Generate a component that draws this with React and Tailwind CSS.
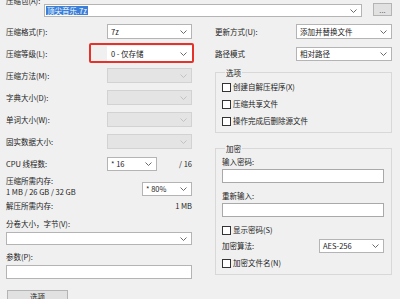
import React from "react";

function Chev({ c = "#5a5a5a" }) {
  return (
    <svg width="7" height="4" viewBox="0 0 7 4" className="shrink-0">
      <path d="M0.5 0.5L3.5 3.5L6.5 0.5" fill="none" stroke={c} strokeWidth="0.9" />
    </svg>
  );
}

function Sel({ text, disabled, className = "" }) {
  return (
    <div
      className={`flex items-center justify-between border pl-[3px] pr-[4px] ${
        disabled ? "border-[#d2d2d2] bg-[#e4e4e4]" : "border-[#b4b4b4] bg-white"
      } ${className}`}
    >
      <span>{text}</span>
      <Chev c={disabled ? "#bdbdbd" : "#5a5a5a"} />
    </div>
  );
}

function Check({ label, className = "" }) {
  return (
    <div className={`flex items-center h-[12px] ${className}`}>
      <div className="w-[9px] h-[9px] border border-[#333] bg-white shrink-0" />
      <span className="ml-[2px]">{label}</span>
    </div>
  );
}

export default function App() {
  return (
    <div className="w-[400px] h-[299px] overflow-hidden bg-[#f0f0f0] text-[#222] text-[7.5px] leading-none font-['Noto_Sans_CJK_SC','Noto_Sans',sans-serif]">
      {/* top */}
      <div className="pl-[6px] mt-[-4px] h-[8px] flex items-end">压缩包(A):</div>
      <div className="flex h-[13px] items-stretch">
        <div className="ml-[44px] w-[318px] flex items-center justify-between border border-[#b4b4b4] bg-white pl-[1px] pr-[4px]">
          <span className="bg-[#3b7fd9] text-white px-[1px] py-[1px]">顶尖音乐.7z</span>
          <Chev />
        </div>
        <div className="ml-[11px] w-[19px] mt-[-1px] h-[13px] border border-[#b4b4b4] bg-[#e1e1e1] flex items-center justify-center text-[#666]">
          ...
        </div>
      </div>

      <div className="flex mt-[7px]">
        {/* left column */}
        <div className="ml-[6px] w-[186px] flex flex-col">
          <div className="flex flex-col gap-[7px]">
            <div className="flex h-[15px] items-center justify-between">
              <span>压缩格式(F):</span>
              <Sel text="7z" className="w-[85px] h-[15px]" />
            </div>
            <div className="flex h-[15px] items-center justify-between">
              <span>压缩等级(L):</span>
              <div className="relative w-[85px] h-[15px]">
                <Sel text="0 - 仅存储" className="w-[85px] h-[15px] border-white" />
                <div className="absolute top-[-3px] bottom-[-2px] left-[-18px] right-[-2px] border-2 border-[#e5322b] rounded-[2px]" />
              </div>
            </div>
            <div className="flex h-[15px] items-center justify-between">
              <span>压缩方法(M):</span>
              <Sel text="" disabled className="w-[85px] h-[15px]" />
            </div>
            <div className="flex h-[15px] items-center justify-between">
              <span>字典大小(D):</span>
              <Sel text="" disabled className="w-[85px] h-[15px]" />
            </div>
            <div className="flex h-[15px] items-center justify-between">
              <span>单词大小(W):</span>
              <Sel text="" disabled className="w-[85px] h-[15px]" />
            </div>
            <div className="flex h-[15px] items-center justify-between">
              <span>固实数据大小:</span>
              <Sel text="" disabled className="w-[85px] h-[15px]" />
            </div>
          </div>

          <div className="flex h-[15px] items-center mt-[7px]">
            <span className="w-[101px]">CPU 线程数:</span>
            <Sel text="* 16" className="w-[50px] h-[14px]" />
            <span className="flex-1 text-right">/ 16</span>
          </div>

          <div className="flex h-[23px] mt-[4px] justify-between">
            <div className="flex flex-col">
              <span className="h-[11px] flex items-center">压缩所需内存:</span>
              <span className="h-[12px] flex items-center">1 MB / 26 GB / 32 GB</span>
            </div>
            <Sel text="* 80%" className="w-[50px] h-[14px] mt-[7px]" />
          </div>

          <div className="flex h-[12px] items-center justify-between mt-[2px]">
            <span>解压所需内存:</span>
            <span>1 MB</span>
          </div>

          <div className="h-[10px] flex items-center mt-[7px]">分卷大小，字节(V):</div>
          <Sel text="" className="w-[186px] h-[13px] mt-[3px]" />

          <div className="h-[10px] flex items-center mt-[7px]">参数(P):</div>
          <div className="w-[186px] h-[14px] mt-[3px] border border-[#b4b4b4] bg-white" />

          <div className="ml-[1px] w-[61px] h-[14px] mt-[11px] border border-[#b4b4b4] bg-[#e1e1e1] flex items-center justify-center">
            选项
          </div>
        </div>

        {/* right column */}
        <div className="ml-[23px] w-[177px] flex flex-col">
          <div className="flex h-[15px] items-center justify-between">
            <span>更新方式(U):</span>
            <Sel text="添加并替换文件" className="w-[96px] h-[15px]" />
          </div>
          <div className="flex h-[15px] items-center justify-between mt-[7px]">
            <span>路径模式</span>
            <Sel text="相对路径" className="w-[96px] h-[14px]" />
          </div>

          <fieldset className="mt-[7px] border border-[#d8d8d8] pl-[6px] pb-[5px] flex flex-col">
            <legend className="ml-[3px] px-[1px] leading-[9px]">选项</legend>
            <div className="flex flex-col gap-[5px] mt-[4px]">
              <Check label="创建自解压程序(X)" />
              <Check label="压缩共享文件" />
              <Check label="操作完成后删除源文件" />
            </div>
          </fieldset>

          <fieldset className="mt-[11px] border border-[#d8d8d8] pl-[6px] pr-[7px] pb-[5px] flex flex-col">
            <legend className="ml-[3px] px-[1px] leading-[9px]">加密</legend>
            <div className="h-[10px] flex items-center mt-[4px]">输入密码:</div>
            <div className="h-[14px] mt-[2px] border border-[#a9a9a9] bg-white" />
            <div className="h-[10px] flex items-center mt-[8px]">重新输入:</div>
            <div className="h-[14px] mt-[2px] border border-[#a9a9a9] bg-white" />
            <Check label="显示密码(S)" className="mt-[7px]" />
            <div className="flex h-[14px] items-center justify-between mt-[3px]">
              <span>加密算法:</span>
              <Sel text="AES-256" className="w-[65px] h-[14px]" />
            </div>
            <Check label="加密文件名(N)" className="mt-[4px]" />
          </fieldset>
        </div>
      </div>
    </div>
  );
}
